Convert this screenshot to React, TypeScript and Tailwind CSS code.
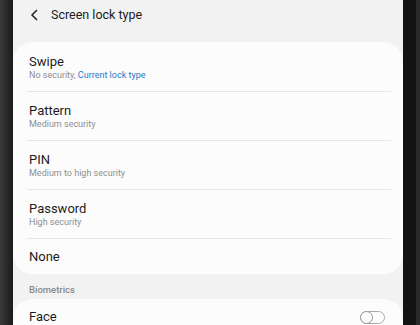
import React from "react";

type Option = { title: string; sub?: string; current?: boolean };

const options: Option[] = [
  { title: "Swipe", sub: "No security,", current: true },
  { title: "Pattern", sub: "Medium security" },
  { title: "PIN", sub: "Medium to high security" },
  { title: "Password", sub: "High security" },
  { title: "None" },
];

const Row = ({ item, last }: { item: Option; last: boolean }) => (
  <div className={last ? "" : "mr-[12px] ml-[14px] border-b border-[#e6e6e6]"}>
    <div className={item.sub ? "pl-[2px] pt-[11px] pb-[10px]" : "pl-[16px] pt-[10px] pb-[9px]"}>
      <div className="text-[13px] leading-[16px] text-[#1c1c1c]">{item.title}</div>
      {item.sub && (
        <div className="-mt-[1px] text-[9px] leading-[12px] text-[#8e8e8e]">
          {item.sub}
          {item.current && <span className="text-[#2a78c4]"> Current lock type</span>}
        </div>
      )}
    </div>
  </div>
);

const App = () => {
  return (
    <div className="flex h-[325px] w-[420px] overflow-hidden font-['Roboto',sans-serif]">
      <div className="w-[13px] bg-gradient-to-r from-[#3a3a3a] via-[#2a2a2a] to-[#1a1a1a]" />
      <div className="flex w-[390px] flex-col bg-[#f2f2f2]">
        <div className="flex h-[42px] items-start gap-[11px] pl-[17px] pt-[6px]">
          <svg width="10" height="18" viewBox="0 0 10 18">
            <path d="M7 4 L2 9 L7 14" fill="none" stroke="#222" strokeWidth="1.5" />
          </svg>
          <span className="text-[12.5px] leading-[18px] text-[#1c1c1c]">Screen lock type</span>
        </div>
        <div className="rounded-[20px] bg-[#fcfcfc] pt-[1px]">
          {options.map((o, i) => (
            <Row key={o.title} item={o} last={i === options.length - 1} />
          ))}
        </div>
        <div className="pl-[16px] pt-[10px] pb-[3px] text-[9.5px] leading-[12px] font-medium text-[#8a8a8a]">
          Biometrics
        </div>
        <div className="flex flex-1 items-start justify-between rounded-t-[20px] bg-[#fcfcfc] pl-[16px] pr-[18px] pt-[10px]">
          <span className="text-[13px] leading-[16px] text-[#1c1c1c]">Face</span>
          <div className="relative mt-[2px] h-[13px] w-[25px] rounded-full border border-[#aaaaaa]">
            <div className="absolute -left-[1px] -top-[1px] h-[13px] w-[13px] rounded-full border border-[#999999] bg-[#fcfcfc]" />
          </div>
        </div>
      </div>
      <div className="flex w-[17px]">
        <div className="w-[13px] bg-[#131313]" />
        <div className="w-[4px] bg-[#2a2a2a]" />
      </div>
    </div>
  );
};

export default App;
